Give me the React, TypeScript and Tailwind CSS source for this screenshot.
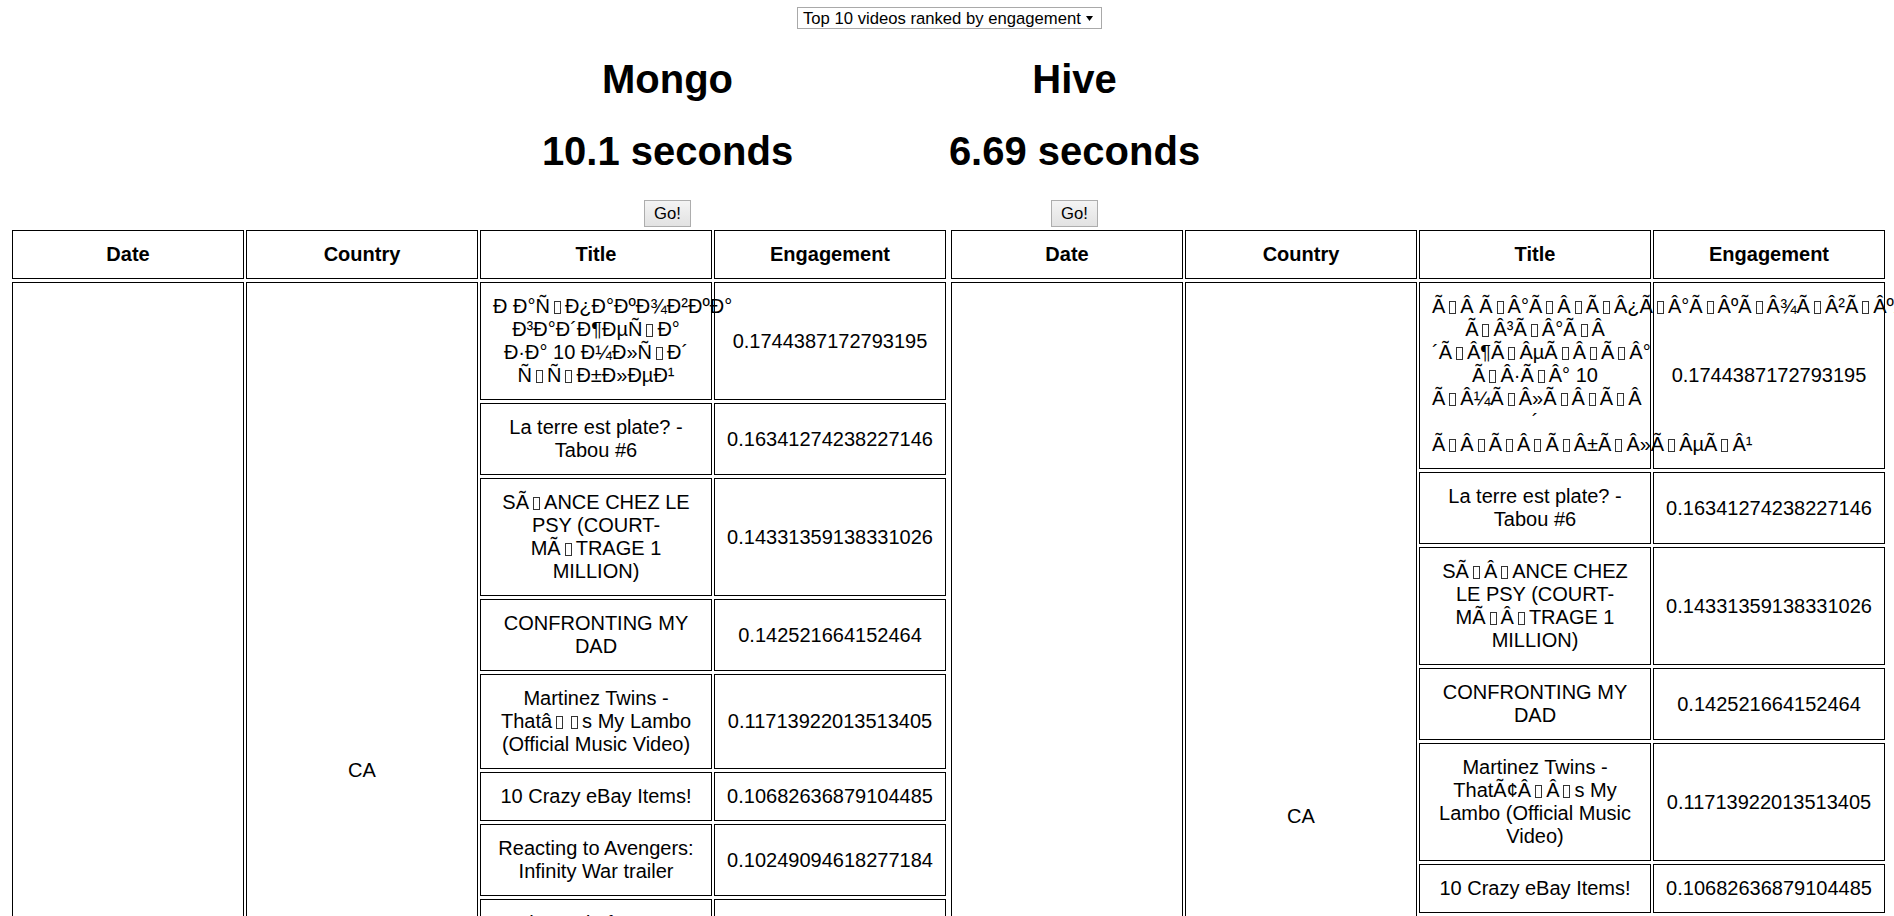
const enc = new TextEncoder();

// utf-8 bytes read back as latin-1, the way the page shows them
function garble(s: string) {
  return Array.from(enc.encode(s), (b) => String.fromCharCode(b)).join("");
}

const titles: [string, string][] = [
  ["Распаковка гаджета за 10 млрд рублей", "0.1744387172793195"],
  ["La terre est plate? - Tabou #6", "0.16341274238227146"],
  ["SÉANCE CHEZ LE PSY (COURT-MÉTRAGE 1 MILLION)", "0.14331359138331026"],
  ["CONFRONTING MY DAD", "0.142521664152464"],
  ["Martinez Twins - That\u2019s My Lambo (Official Music Video)", "0.11713922013513405"],
  ["10 Crazy eBay Items!", "0.10682636879104485"],
  ["Reacting to Avengers: Infinity War trailer", "0.10249094618277184"],
  ["The end of an era (thank you all for 5 amazing years on YouTube)", "0.09896432651174357"],
  ["Playing Fortnite with my little brother for the first time (he got so mad)", "0.09730512861604279"],
  ["I tried the most expensive fast food items in Canada for a full week", "0.0952163082463194"],
];

const mongoRows = titles.map(([t, e]) => [garble(t), e] as [string, string]);
const hiveRows = titles.map(([t, e]) => [garble(garble(t)), e] as [string, string]);

const cell =
  "border border-black px-[12px] py-[12px] text-center align-middle text-[20px] leading-[23px]";

// control characters show up as an empty box, 15px wide
function Garbled({ text }: { text: string }) {
  const parts = text.split(/([\u0080-\u009f])/);
  return (
    <>
      {parts.map((p, i) =>
        /^[\u0080-\u009f]$/.test(p) ? (
          <span
            key={i}
            className="mx-[4px] border border-[#333] pl-[5px] align-[2px] text-[10px] leading-[0px]"
          ></span>
        ) : (
          p
        ),
      )}
    </>
  );
}

function DataTable({ rows }: { rows: [string, string][] }) {
  return (
    <table className="w-[938px] table-fixed border-separate border-spacing-x-[2px] border-spacing-y-[3px]">
      <colgroup>
        <col className="w-[232px]" />
        <col className="w-[232px]" />
        <col className="w-[232px]" />
        <col className="w-[232px]" />
      </colgroup>
      <thead>
        <tr>
          {["Date", "Country", "Title", "Engagement"].map((h) => (
            <th key={h} className={cell + " font-bold"}>
              {h}
            </th>
          ))}
        </tr>
      </thead>
      <tbody>
        {rows.map(([t, e], i) => (
          <tr key={i}>
            {i === 0 && (
              <>
                <td rowSpan={rows.length} className={cell}></td>
                <td rowSpan={rows.length} className={cell}>
                  CA
                </td>
              </>
            )}
            <td className={cell}>
              <Garbled text={t} />
            </td>
            <td className={cell}>{e}</td>
          </tr>
        ))}
      </tbody>
    </table>
  );
}

export default function App() {
  return (
    <div className="h-[916px] overflow-hidden bg-white font-['Liberation_Sans',Arial,sans-serif] text-black">
      {/* query picker */}
      <div className="flex justify-center pl-[5px] pt-[7px]">
        <div className="flex h-[22px] w-[305px] items-center justify-between border border-[#a9a9a9] pl-[5px] pr-[8px] text-[16.67px] leading-[19px]">
          <span>Top 10 videos ranked by engagement</span>
          <svg width="7" height="5" viewBox="0 0 7 5">
            <path d="M0 0h7L3.5 5z" fill="#000" />
          </svg>
        </div>
      </div>

      {/* timings */}
      <div className="mt-[27px] flex pl-[464px]">
        {[
          ["Mongo", "10.1 seconds"],
          ["Hive", "6.69 seconds"],
        ].map(([name, time]) => (
          <div key={name} className="flex w-[407px] flex-col items-center">
            <h1 className="text-[40px] font-bold leading-[46px]">{name}</h1>
            <h1 className="mt-[26px] text-[40px] font-bold leading-[46px]">{time}</h1>
            <button className="mt-[26px] h-[27px] w-[47px] border border-[#adadad] bg-gradient-to-b from-[#f4f4f4] to-[#e2e2e2] text-[16.67px] leading-[19px]">
              Go!
            </button>
          </div>
        ))}
      </div>

      {/* results */}
      <div className="flex items-start gap-[1px] pl-[10px]">
        <DataTable rows={mongoRows} />
        <DataTable rows={hiveRows} />
      </div>
    </div>
  );
}
